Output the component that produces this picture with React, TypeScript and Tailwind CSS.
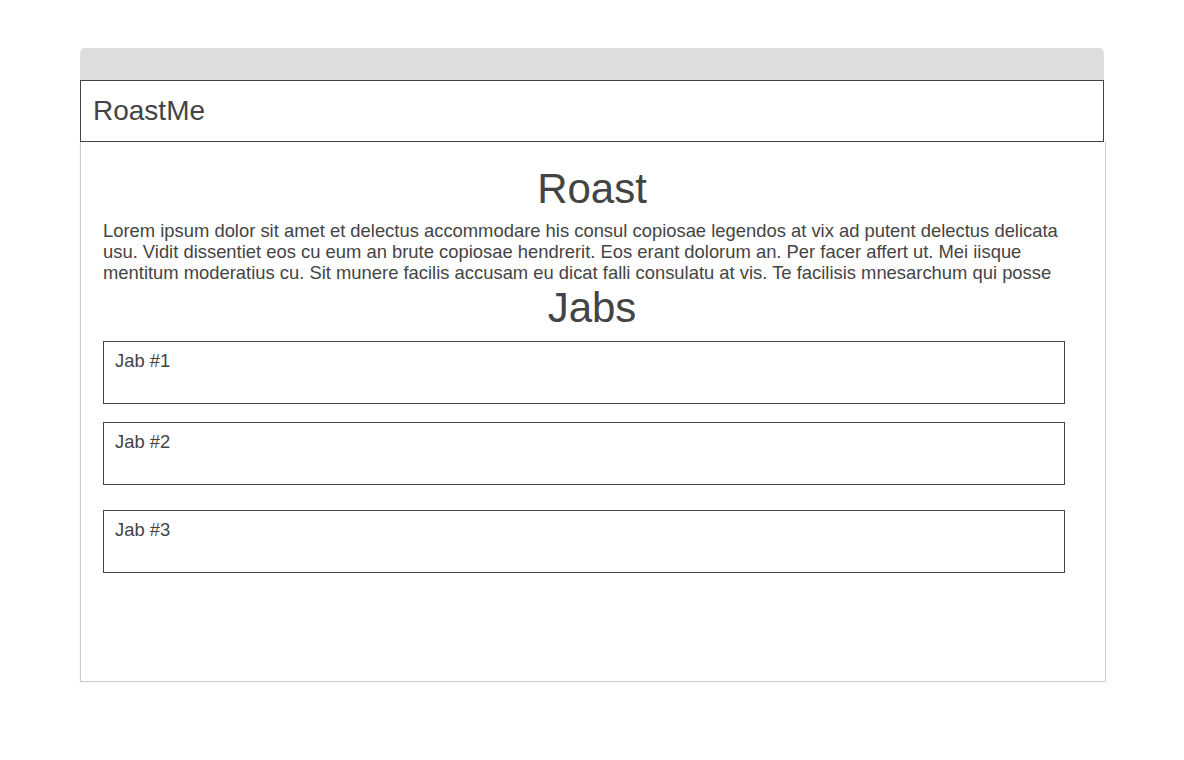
export default function App() {
  const lorem =
    'Lorem ipsum dolor sit amet et delectus accommodare his consul copiosae legendos at vix ad putent delectus delicata usu. Vidit dissentiet eos cu eum an brute copiosae hendrerit. Eos erant dolorum an. Per facer affert ut. Mei iisque mentitum moderatius cu. Sit munere facilis accusam eu dicat falli consulatu at vis. Te facilisis mnesarchum qui posse omnium mediocritatem, est cu stet noster dignissim. Ius nostro facilisi ad, ex sed iudico.';

  return (
    <div className="min-h-[760px] bg-white pt-12 pl-20 text-[#444]" style={{ fontFamily: '"Liberation Sans", Arial, sans-serif' }}>
      <div className="w-[1024px]">
        <div className="h-8 rounded-t-[5px] bg-[#ddd]" />
        <div className="flex h-[62px] items-center border border-[#444] px-3">
          <span className="text-[28px] leading-none">RoastMe</span>
        </div>
        <div className="h-[540px] w-[1026px] border border-t-0 border-[#ccc] pl-[22px] pt-[22px] shadow-[-1px_0_2px_rgba(0,0,0,0.05)]">
          <div className="w-[978px]">
            <h1 className="text-center text-[42px] leading-[50px]">Roast</h1>
            <p className="mt-[6px] h-[63px] w-[962px] overflow-hidden text-[18.4px] leading-[21px]">{lorem}</p>
            <h2 className="text-center text-[42px] leading-[50px]">Jabs</h2>
          </div>
          <div className="mt-[8px] w-[962px]">
            <div className="h-[63px] border border-[#444] px-[11px] pt-[8px] text-[18.4px] leading-[21px]">Jab #1</div>
            <div className="mt-[18px] h-[63px] border border-[#444] px-[11px] pt-[8px] text-[18.4px] leading-[21px]">Jab #2</div>
            <div className="mt-[25px] h-[63px] border border-[#444] px-[11px] pt-[8px] text-[18.4px] leading-[21px]">Jab #3</div>
          </div>
        </div>
      </div>
    </div>
  );
}
